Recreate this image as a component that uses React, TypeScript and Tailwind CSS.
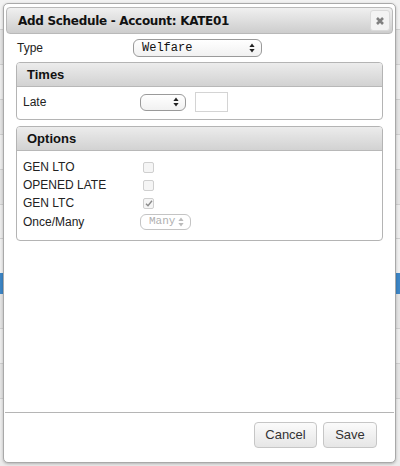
import type { ReactNode } from 'react'

const sans = "font-['Liberation_Sans',Arial,sans-serif]"
const mono = "font-['Liberation_Mono','Courier_New',monospace]"

function Arrows({ color = '#222' }: { color?: string }) {
  return (
    <svg width="6" height="10" viewBox="0 0 6 10" className="shrink-0">
      <path d="M3 0.5 L5.6 4 L0.4 4 Z" fill={color} />
      <path d="M3 9.5 L5.6 6 L0.4 6 Z" fill={color} />
    </svg>
  )
}

function Select({ value, className, disabled }: { value: string; className: string; disabled?: boolean }) {
  return (
    <div
      className={`flex items-center justify-between gap-[3px] rounded-[6px] border pl-[8px] pr-[6px] ${mono} leading-none ${
        disabled
          ? 'border-[#c4c4c4] bg-white text-[11px] text-[#b0b0b0]'
          : 'border-[#9a9a9a] bg-gradient-to-b from-white to-[#f1f1f1] text-[12px] text-[#111]'
      } ${className}`}
    >
      <span>{value}</span>
      <Arrows color={disabled ? '#bbb' : '#222'} />
    </div>
  )
}

function Checkbox({ checked }: { checked?: boolean }) {
  return (
    <div className="flex h-[11px] w-[11px] items-center justify-center rounded-[2px] border border-[#cfcfcf] bg-[#f5f5f5]">
      {checked && (
        <svg width="8" height="7" viewBox="0 0 8 7">
          <path d="M1 3.8 L3 5.8 L7 0.8" fill="none" stroke="#8a8a8a" strokeWidth="1.4" />
        </svg>
      )}
    </div>
  )
}

function Panel({ title, children }: { title: string; children: ReactNode }) {
  return (
    <div className="rounded-[4px] border border-[#b4b4b4] bg-white">
      <div className="flex h-[24px] items-center rounded-t-[3px] border-b border-[#b8b8b8] bg-gradient-to-b from-[#ececec] to-[#d2d2d2] pl-[10px] text-[13px] font-bold text-[#111]">
        {title}
      </div>
      {children}
    </div>
  )
}

function Row({ label, h, children }: { label: string; h: string; children: ReactNode }) {
  return (
    <div className={`flex items-center ${h}`}>
      <span className="w-[117px] shrink-0 text-[12px] text-[#222]">{label}</span>
      {children}
    </div>
  )
}

export default function App() {
  return (
    <div className={`relative h-[466px] w-[400px] overflow-hidden bg-[#ececec] ${sans}`}>
      {/* list rows of the page underneath */}
      <div className="flex flex-col">
        <div className="h-[30px] border-b border-[#d0d0d0] bg-[#f2f2f2]" />
        <div className="h-[35px] border-b border-[#cfcfcf] bg-[#e4e4e4]" />
        <div className="h-[35px] border-b border-[#cfcfcf] bg-[#ededed]" />
        <div className="h-[35px] border-b border-[#cfcfcf] bg-[#e4e4e4]" />
        <div className="h-[35px] border-b border-[#cfcfcf] bg-[#ededed]" />
        <div className="h-[35px] border-b border-[#cfcfcf] bg-[#e4e4e4]" />
        <div className="h-[34px] border-b border-[#cfcfcf] bg-[#ededed]" />
        <div className="h-[34px] bg-[#f0f0f0]" />
        <div className="h-[21px] bg-[#3d86c6]" />
        <div className="h-[35px] border-b border-[#cfcfcf] bg-[#e4e4e4]" />
        <div className="h-[35px] border-b border-[#cfcfcf] bg-[#ededed]" />
        <div className="h-[35px] border-b border-[#cfcfcf] bg-[#e4e4e4]" />
        <div className="h-[60px] bg-[#ededed]" />
      </div>

      {/* dialog */}
      <div className="absolute left-[3px] top-[3px] flex h-[460px] w-[393px] flex-col rounded-[5px] border border-[#a9a9a9] bg-white shadow-[0_1px_3px_rgba(0,0,0,0.25)]">
        <div className="mx-[2px] mt-[3px] flex h-[27px] items-center justify-between rounded-[4px] border border-[#b9b9b9] bg-gradient-to-b from-[#f0f0f0] to-[#cdcdcd] pl-[11px] pr-[2px]">
          <span className="font-['DejaVu_Sans',Verdana,sans-serif] text-[12px] font-bold tracking-[-0.3px] text-[#111]">
            Add Schedule - Account: KATE01
          </span>
          <div className="flex h-[21px] w-[20px] items-center justify-center rounded-[3px] border border-[#dadada] bg-[#f3f3f3]">
            <svg width="10" height="10" viewBox="0 0 10 10">
              <path d="M2 2 L8 8 M8 2 L2 8" stroke="#808080" strokeWidth="2.6" />
            </svg>
          </div>
        </div>

        <div className="flex flex-1 flex-col px-[12px]">
          <div className="flex h-[24px] items-center pl-[1px] pt-[3px]">
            <span className="w-[116px] shrink-0 text-[12px] text-[#222]">Type</span>
            <Select value="Welfare" className="h-[18px] w-[129px]" />
          </div>

          <div className="mt-[4px]">
            <Panel title="Times">
              <div className="px-[6px] pb-[3px] pt-[1px]">
                <Row label="Late" h="h-[28px]">
                  <Select value="" className="h-[17px] w-[46px]" />
                  <div className="ml-[9px] h-[20px] w-[33px] border border-[#d4d4d4] bg-white" />
                </Row>
              </div>
            </Panel>
          </div>

          <div className="mt-[6px]">
            <Panel title="Options">
              <div className="px-[6px] pb-[9px] pt-[7px]">
                <Row label="GEN LTO" h="h-[18px]">
                  <div className="pl-[3px]">
                    <Checkbox />
                  </div>
                </Row>
                <Row label="OPENED LATE" h="h-[18px]">
                  <div className="pl-[3px]">
                    <Checkbox />
                  </div>
                </Row>
                <Row label="GEN LTC" h="h-[18px]">
                  <div className="pl-[3px]">
                    <Checkbox checked />
                  </div>
                </Row>
                <Row label="Once/Many" h="h-[19px]">
                  <Select value="Many" disabled className="h-[16px] w-[51px] pl-[6px] pr-[5px]" />
                </Row>
              </div>
            </Panel>
          </div>
        </div>

        <div className="mx-[1px] border-t border-[#b5b5b5]" />
        <div className="flex h-[49px] items-start justify-end gap-[6px] pr-[18px] pt-[9px]">
          <button className="h-[26px] w-[63px] rounded-[4px] border border-[#c6c6c6] bg-gradient-to-b from-[#fbfbfb] to-[#e6e6e6] text-[13px] text-[#333]">
            Cancel
          </button>
          <button className="h-[26px] w-[54px] rounded-[4px] border border-[#c6c6c6] bg-gradient-to-b from-[#fbfbfb] to-[#e6e6e6] text-[13px] text-[#333]">
            Save
          </button>
        </div>
      </div>
    </div>
  )
}
